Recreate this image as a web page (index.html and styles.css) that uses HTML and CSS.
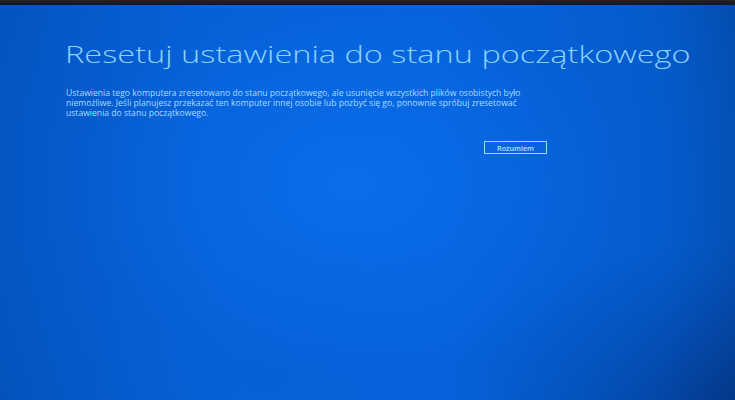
FILE: index.html
```html
<!DOCTYPE html>
<html lang="pl">
<head>
<meta charset="utf-8">
<link rel="stylesheet" href="styles.css">
</head>
<body>
<div class="bezel"></div>
<main class="screen">
  <h1 class="title">Resetuj ustawienia do stanu początkowego</h1>
  <p class="message">Ustawienia tego komputera zresetowano do stanu początkowego, ale usunięcie wszystkich plików osobistych było niemożliwe. Jeśli planujesz przekazać ten komputer innej osobie lub pozbyć się go, ponownie spróbuj zresetować ustawienia do stanu początkowego.</p>
  <div class="actions"><button class="btn">Rozumiem</button></div>
</main>
</body>
</html>
```
FILE: styles.css
```css
html, body {
  margin: 0;
  padding: 0;
  width: 735px;
  height: 400px;
  overflow: hidden;
}
body {
  display: flex;
  flex-direction: column;
  background: #0a0d1c;
  font-family: "Open Sans", "Noto Sans", sans-serif;
}
.bezel {
  height: 5px;
  background: linear-gradient(#2a2228, #101525);
  flex: none;
}
.screen {
  flex: 1;
  padding: 34px 0 0 65px;
  background:
    radial-gradient(ellipse 70% 90% at 48% 45%, rgba(10,110,235,0.9) 0%, rgba(6,95,215,0.5) 55%, rgba(0,60,150,0) 100%),
    radial-gradient(ellipse 40% 40% at 100% 100%, rgba(2,40,110,0.6) 0%, rgba(2,40,110,0) 100%),
    linear-gradient(90deg, #0450b8 0%, #0562d6 30%, #0565de 60%, #0458c4 90%, #044aa8 100%);
}
.title {
  margin: 0;
  width: max-content;
  font-weight: 300;
  font-size: 24px;
  line-height: 30px;
  color: #8dd3ff;
  white-space: nowrap;
  transform: scaleX(1.355);
  transform-origin: left center;
}
.message {
  margin: 19px 0 0 1px;
  width: 466px;
  font-size: 8.6px;
  line-height: 10px;
  color: #a8dcff;
}
.actions {
  width: 482px;
  display: flex;
  justify-content: flex-end;
  margin-top: 23px;
}
.btn {
  font-family: inherit;
  font-size: 7.2px;
  font-weight: 600;
  color: #b8e2ff;
  background: transparent;
  border: 1.5px solid #a0d6ff;
  padding: 0;
  width: 63px;
  height: 13px;
  line-height: 10px;
}
```
